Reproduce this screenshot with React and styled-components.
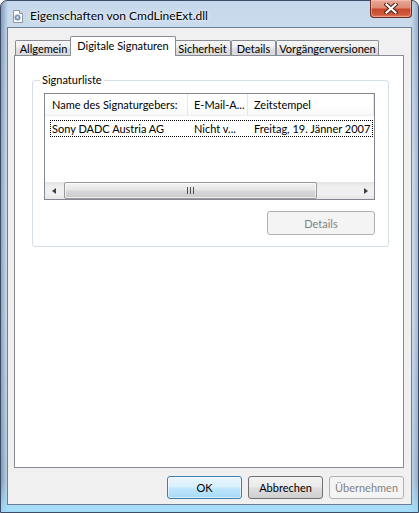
import React from 'react'
import styled, { createGlobalStyle, css } from 'styled-components'

const FONT = `Lato, 'Liberation Sans', Arial, sans-serif`

const GlobalStyle = createGlobalStyle`
  html, body {
    margin: 0;
    padding: 0;
    background: #ffffff;
  }
  body {
    font-family: ${FONT};
    font-size: 11px;
    color: #000;
  }
  * { box-sizing: border-box; }
`

const tabs = [
  { label: 'Allgemein', width: 57 },
  { label: 'Digitale Signaturen', width: 102, active: true },
  { label: 'Sicherheit', width: 57 },
  { label: 'Details', width: 45 },
  { label: 'Vorgängerversionen', width: 103 }
]

const columns = [
  { title: 'Name des Signaturgebers:', width: 143, pad: 7 },
  { title: 'E-Mail-A...', width: 60, pad: 6 },
  { title: 'Zeitstempel', pad: 6 }
]

const rows = [
  ['Sony DADC Austria AG', 'Nicht v...', 'Freitag, 19. Jänner 2007']
]

const App = () => (
  <>
    <GlobalStyle />
    <Window>
      <TitleBar>
        <TitleIcon />
        <TitleText>Eigenschaften von CmdLineExt.dll</TitleText>
        <CloseButton aria-label='Schließen'>
          <CloseGlyph />
        </CloseButton>
      </TitleBar>
      <Client>
        <TabStrip>
          {tabs.map((t) => (
            <Tab key={t.label} $width={t.width} $active={t.active}>
              {t.label}
            </Tab>
          ))}
        </TabStrip>
        <Panel>
          <GroupBox>
            <Legend>Signaturliste</Legend>
            <GroupBody>
              <ListView>
                <HeaderRow>
                  {columns.map((c) => (
                    <HeaderCell key={c.title} $width={c.width} $pad={c.pad}>
                      {c.title}
                    </HeaderCell>
                  ))}
                </HeaderRow>
                <RowArea>
                  {rows.map((r) => (
                    <Row key={r[0]}>
                      <Cell $width={137} $pad={1}>{r[0]}</Cell>
                      <Cell $width={60} $pad={6}>{r[1]}</Cell>
                      <Cell $pad={6}>{r[2]}</Cell>
                    </Row>
                  ))}
                </RowArea>
                <ScrollBar>
                  <ScrollArrow><Arrow $dir='left' /></ScrollArrow>
                  <ScrollTrack>
                    <Thumb><Grip /></Thumb>
                  </ScrollTrack>
                  <ScrollArrow><Arrow $dir='right' /></ScrollArrow>
                </ScrollBar>
              </ListView>
              <DetailsButton disabled $variant='disabled'>Details</DetailsButton>
            </GroupBody>
          </GroupBox>
        </Panel>
        <Footer>
          <Button $variant='default'>OK</Button>
          <Button>Abbrechen</Button>
          <Button disabled $variant='disabled'>Übernehmen</Button>
        </Footer>
      </Client>
    </Window>
  </>
)

export default App

const TitleIcon = () => (
  <IconSvg width='12' height='13' viewBox='0 0 12 13'>
    <path d='M1.5 0.5h6l3 3v9h-9z' fill='#fdfdfd' stroke='#8d97a3' />
    <path d='M7.5 0.5v3h3' fill='#dfe4ea' stroke='#8d97a3' />
    <circle cx='5.5' cy='7.5' r='2.6' fill='#8fa9c4' stroke='#5a7391' strokeWidth='0.8' />
    <circle cx='5.5' cy='7.5' r='0.9' fill='#eef3f8' />
  </IconSvg>
)

const CloseGlyph = () => (
  <svg width='14' height='11' viewBox='0 0 14 11'>
    <path d='M2.5 1.5l9 8M11.5 1.5l-9 8' stroke='#4a1f18' strokeWidth='4.2' strokeLinecap='square' />
    <path d='M2.5 1.5l9 8M11.5 1.5l-9 8' stroke='#ffffff' strokeWidth='2.2' strokeLinecap='square' />
  </svg>
)

const Window = styled.div`
  width: 419px;
  height: 513px;
  display: flex;
  flex-direction: column;
  padding: 0 6px 7px;
  border: 1px solid #3b4d66;
  border-radius: 7px 7px 0 0;
  background:
    linear-gradient(to bottom, rgba(255, 255, 255, 0) 0, rgba(255, 255, 255, 0) 94%, rgba(160, 222, 250, 0.9) 100%),
    linear-gradient(to right, rgba(62, 96, 138, 0.5) 0, rgba(62, 96, 138, 0) 7px, rgba(62, 96, 138, 0) calc(100% - 7px), rgba(62, 96, 138, 0.35) 100%),
    linear-gradient(to bottom, #c6d8eb 0%, #d9e5f2 30%, #dce7f2 60%, #c4d7ea 90%);
`

const TitleBar = styled.div`
  height: 26px;
  display: flex;
  align-items: flex-start;
`

const IconSvg = styled.svg`
  margin: 9px 0 0 5px;
  flex: none;
`

const TitleText = styled.div`
  margin: 7px 0 0 6px;
  font-size: 12px;
  line-height: 15px;
  white-space: nowrap;
  text-shadow: 0 0 6px rgba(255, 255, 255, 0.95), 0 0 2px rgba(255, 255, 255, 0.9);
`

const CloseButton = styled.div`
  margin: -1px 0 0 auto;
  width: 42px;
  height: 18px;
  display: flex;
  align-items: center;
  justify-content: center;
  border: 1px solid #6a2a22;
  border-top: none;
  border-radius: 0 0 4px 4px;
  background: linear-gradient(to bottom, #e9a898 0%, #de8b75 45%, #c9482d 55%, #d05a3c 85%, #e07c5f 100%);
  box-shadow: inset 0 0 0 1px rgba(255, 210, 200, 0.45);
`

const Client = styled.div`
  flex: 1;
  display: flex;
  flex-direction: column;
  border: 1px solid #6c7e96;
  background: #f0f0f0;
  padding: 8px 7px 5px 6px;
`

const TabStrip = styled.div`
  position: relative;
  z-index: 1;
  height: 20px;
  margin-bottom: -1px;
  padding-left: 1px;
  display: flex;
  align-items: flex-end;
`

const Tab = styled.div`
  flex: none;
  width: ${(p) => p.$width}px;
  height: 15px;
  margin-bottom: 1px;
  display: flex;
  align-items: center;
  justify-content: center;
  padding-top: 1px;
  font-size: 11px;
  white-space: nowrap;
  border: 1px solid #898c95;
  border-bottom: none;
  border-radius: 2px 2px 0 0;
  background: linear-gradient(to bottom, #f6f6f6 0%, #ededed 45%, #e0e0e0 55%, #d8d8d8 100%);

  ${(p) => p.$active && css`
    position: relative;
    width: ${p.$width + 4}px;
    height: 20px;
    margin: 0 -2px;
    padding: 0 0 3px;
    background: #ffffff;
  `}
`

const Panel = styled.div`
  flex: 1;
  display: flex;
  flex-direction: column;
  background: #ffffff;
  border: 1px solid #898c95;
  padding: 17px 14px 0 17px;
`

const GroupBox = styled.fieldset`
  margin: 0;
  padding: 0;
  min-width: 0;
  border: 1px solid #d5dfe5;
  border-radius: 3px;
`

const Legend = styled.legend`
  margin-left: 7px;
  padding: 0 2px;
  font-size: 11px;
  line-height: 14px;
`

const GroupBody = styled.div`
  display: flex;
  flex-direction: column;
  padding: 6px 13px 11px 11px;
`

const ListView = styled.div`
  height: 107px;
  display: flex;
  flex-direction: column;
  border: 1px solid #828790;
  overflow: hidden;
`

const HeaderRow = styled.div`
  height: 22px;
  flex: none;
  display: flex;
  background: linear-gradient(to bottom, #ffffff 0%, #ffffff 55%, #f7f8f9 100%);
  border-bottom: 1px solid #eef0f3;
`

const HeaderCell = styled.div`
  ${(p) => (p.$width ? `width: ${p.$width}px; flex: none;` : 'flex: 1;')}
  padding-left: ${(p) => p.$pad}px;
  display: flex;
  align-items: center;
  white-space: nowrap;
  overflow: hidden;
  border-right: 1px solid #e3e8ee;
`

const RowArea = styled.div`
  flex: 1;
  padding: 4px 1px 0 5px;
`

const Row = styled.div`
  height: 17px;
  display: flex;
  align-items: center;
  border: 1px dotted #000;
`

const Cell = styled.div`
  ${(p) => (p.$width ? `width: ${p.$width}px; flex: none;` : 'flex: 1;')}
  padding-left: ${(p) => p.$pad}px;
  white-space: nowrap;
  overflow: hidden;
`

const ScrollBar = styled.div`
  height: 17px;
  flex: none;
  display: flex;
  background: linear-gradient(to bottom, #e3e3e3 0%, #f0f0f0 30%, #f0f0f0 70%, #e6e6e6 100%);
`

const ScrollArrow = styled.div`
  width: 17px;
  flex: none;
  display: flex;
  align-items: center;
  justify-content: center;
`

const Arrow = styled.div`
  width: 0;
  height: 0;
  border-top: 3.5px solid transparent;
  border-bottom: 3.5px solid transparent;
  ${(p) => (p.$dir === 'left'
    ? 'border-right: 4px solid #404040;'
    : 'border-left: 4px solid #404040;')}
`

const ScrollTrack = styled.div`
  flex: 1;
  display: flex;
  padding: 0 0 0 2px;
`

const Thumb = styled.div`
  width: 253px;
  height: 17px;
  display: flex;
  align-items: center;
  justify-content: center;
  border: 1px solid #9a9a9a;
  border-radius: 2px;
  background: linear-gradient(to bottom, #f3f3f3 0%, #e6e6e6 45%, #d7d7d7 55%, #cbcbcb 100%);
  box-shadow: inset 0 0 0 1px rgba(255, 255, 255, 0.6);
`

const Grip = styled.div`
  width: 7px;
  height: 7px;
  background: repeating-linear-gradient(to right, #505050 0, #505050 1px, transparent 1px, transparent 3px);
`

const buttonVariants = {
  normal: css`
    border-color: #707070;
    background: linear-gradient(to bottom, #f2f2f2 0%, #ebebeb 45%, #dddddd 55%, #cfcfcf 100%);
  `,
  default: css`
    border-color: #3c7fb1;
    background: linear-gradient(to bottom, #eaf6fd 0%, #d9f0fc 45%, #bee6fd 55%, #a7d9f5 100%);
    box-shadow: inset 0 0 0 1px rgba(255, 255, 255, 0.5);
  `,
  disabled: css`
    border-color: #adb2b5;
    background: #f4f4f4;
    color: #838383;
  `
}

const Button = styled.button`
  width: 75px;
  height: 23px;
  padding: 0;
  font-family: ${FONT};
  font-size: 11px;
  color: #000;
  border: 1px solid;
  border-radius: 3px;
  ${(p) => buttonVariants[p.$variant || 'normal']}
`

const DetailsButton = styled(Button)`
  align-self: flex-end;
  width: 108px;
  height: 24px;
  margin-top: 11px;
`

const Footer = styled.div`
  display: flex;
  justify-content: flex-end;
  gap: 6px;
  margin-top: 8px;
`
